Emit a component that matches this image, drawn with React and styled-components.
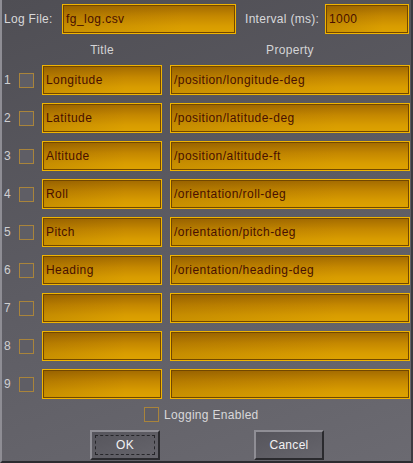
import React from "react";
import styled, { createGlobalStyle } from "styled-components";

const Global = createGlobalStyle`
  html, body { margin: 0; padding: 0; background: #5a5960; }
  * { box-sizing: border-box; }
`;

const Window = styled.div`
  width: 413px;
  height: 463px;
  padding: 4px 1px 0 2px;
  border-left: 2px solid #8e8d94;
  border-right: 2px solid #3c3b41;
  border-bottom: 2px solid #2c2b30;
  background: linear-gradient(160deg, #4f4e54 0%, #5d5c63 50%, #6b6a71 100%);
  font-family: "Liberation Sans", Arial, sans-serif;
  font-size: 12px;
  letter-spacing: 0.3px;
  color: #d6d6d8;
  display: flex;
  flex-direction: column;
`;

const TopRow = styled.div`
  display: flex;
  align-items: center;
  height: 30px;
`;

const Label = styled.span`
  color: #d8d8da;
  white-space: nowrap;
  flex: none;
  width: ${(p) => (p.$w ? `${p.$w}px` : "auto")};
`;

const Field = styled.div`
  width: ${(p) => p.$w}px;
  height: 30px;
  flex: none;
  border: 1px solid #f0b400;
  box-shadow: inset 0 0 0 1px #724700;
  background:
    linear-gradient(to right, rgba(80, 40, 0, 0.14), rgba(80, 40, 0, 0) 70%),
    linear-gradient(to bottom, #a26a00 0%, #c58800 40%, #d89c00 75%, #dea300 100%);
  color: #481000;
  padding-left: 3px;
  display: flex;
  align-items: center;
  white-space: nowrap;
  overflow: hidden;
  margin-right: ${(p) => p.$mr || 0}px;
  letter-spacing: 0.45px;
`;

const Header = styled.div`
  display: flex;
  height: 31px;
  align-items: center;
`;

const HeaderCell = styled.div`
  width: ${(p) => p.$w}px;
  margin-left: ${(p) => p.$ml || 0}px;
  text-align: center;
  color: #d4d4d6;
`;

const Rows = styled.div`
  display: flex;
  flex-direction: column;
  gap: 8px;
`;

const Row = styled.div`
  display: flex;
  align-items: center;
  height: 30px;
`;

const Num = styled.span`
  width: 15px;
  color: #cfcfd2;
`;

const Check = styled.span`
  width: 15px;
  height: 15px;
  flex: none;
  border: 1px solid #a9843b;
  background: #5f5e65;
  margin-right: ${(p) => p.$mr || 0}px;
`;

const LogRow = styled.div`
  display: flex;
  align-items: center;
  justify-content: flex-start;
  height: 15px;
  margin-top: 8px;
  padding-left: 140px;
`;

const Buttons = styled.div`
  display: flex;
  margin-top: 8px;
  padding-left: 86px;
  gap: 94px;
`;

const Button = styled.div`
  width: 70px;
  height: 30px;
  border: 2px solid;
  border-color: #8f8e95 #2a2a2e #2a2a2e #8f8e95;
  background: linear-gradient(160deg, #56555c, #66656c);
  color: #f2f2f4;
  display: flex;
  align-items: center;
  justify-content: center;
  padding: 3px;
`;

const Focus = styled.div`
  flex: 1;
  align-self: stretch;
  border: 1px dashed #26262a;
  display: flex;
  align-items: center;
  justify-content: center;
`;

const rows = [
  ["Longitude", "/position/longitude-deg"],
  ["Latitude", "/position/latitude-deg"],
  ["Altitude", "/position/altitude-ft"],
  ["Roll", "/orientation/roll-deg"],
  ["Pitch", "/orientation/pitch-deg"],
  ["Heading", "/orientation/heading-deg"],
  ["", ""],
  ["", ""],
  ["", ""],
];

export default function App() {
  return (
    <>
      <Global />
      <Window>
        <TopRow>
          <Label $w={58}>Log File:</Label>
          <Field $w={174} $mr={9}>fg_log.csv</Field>
          <Label $w={80}>Interval (ms):</Label>
          <Field $w={84}>1000</Field>
        </TopRow>
        <Header>
          <HeaderCell $w={120} $ml={38}>Title</HeaderCell>
          <HeaderCell $w={240} $ml={8}>Property</HeaderCell>
        </Header>
        <Rows>
          {rows.map(([t, p], i) => (
            <Row key={i}>
              <Num>{i + 1}</Num>
              <Check $mr={8} />
              <Field $w={120} $mr={8}>{t}</Field>
              <Field $w={240}>{p}</Field>
            </Row>
          ))}
        </Rows>
        <LogRow>
          <Check $mr={5} />
          <Label>Logging Enabled</Label>
        </LogRow>
        <Buttons>
          <Button>
            <Focus>OK</Focus>
          </Button>
          <Button>Cancel</Button>
        </Buttons>
      </Window>
    </>
  );
}
